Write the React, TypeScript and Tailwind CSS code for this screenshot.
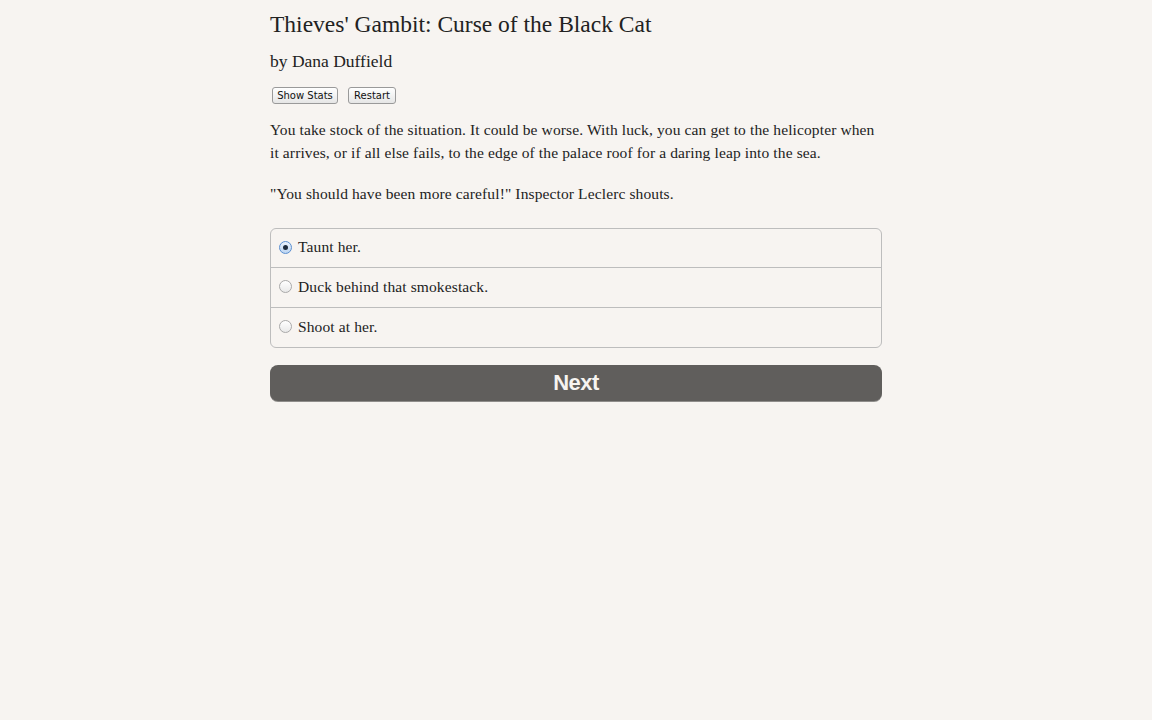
import React from "react";

const serif = "font-['Palatino_Linotype','Book_Antiqua','Liberation_Serif',serif]";

function Radio({ checked }: { checked?: boolean }) {
  return (
    <span
      className={
        "inline-flex items-center justify-center w-[13px] h-[13px] rounded-full border shrink-0 " +
        (checked
          ? "border-[#5b8fd0] bg-gradient-to-b from-[#eaf2fc] to-[#bcd5f2]"
          : "border-[#a9a9a9] bg-gradient-to-b from-[#ffffff] to-[#e9e9e9]")
      }
    >
      {checked && <span className="w-[5px] h-[5px] rounded-full bg-[#1d2b3c]" />}
    </span>
  );
}

export default function App() {
  const options = ["Taunt her.", "Duck behind that smokestack.", "Shoot at her."];
  return (
    <div className="min-h-[720px] w-full bg-[#f7f4f1] text-[#222]">
      <div className={"mx-auto w-[612px] pt-[10px] " + serif}>
        <h1 className="text-[23.5px] leading-[28px] text-[#222]">
          Thieves' Gambit: Curse of the Black Cat
        </h1>
        <div className="mt-[13px] text-[17.5px] leading-[20px] text-[#222]">by Dana Duffield</div>
        <div className="mt-[16px] flex gap-[10px] pl-[2px] font-['DejaVu_Sans',sans-serif]">
          <button className="w-[66px] h-[17px] text-[10px] leading-[15px] rounded-[3px] border border-[#9a9a9a] bg-gradient-to-b from-[#ffffff] to-[#e6e6e6] text-[#111]">
            Show Stats
          </button>
          <button className="w-[48px] h-[17px] text-[10px] leading-[15px] rounded-[3px] border border-[#9a9a9a] bg-gradient-to-b from-[#ffffff] to-[#e6e6e6] text-[#111]">
            Restart
          </button>
        </div>
        <p className="mt-[14px] text-[15.5px] leading-[23px] tracking-[0.12px]">
          You take stock of the situation. It could be worse. With luck, you can get to the helicopter when it
          arrives, or if all else fails, to the edge of the palace roof for a daring leap into the sea.
        </p>
        <p className="mt-[18px] text-[15.5px] leading-[23px] tracking-[0.12px]">
          "You should have been more careful!" Inspector Leclerc shouts.
        </p>
        <div className="mt-[23px] rounded-[6px] border border-[#bdbdbd] bg-[#f7f4f1]">
          {options.map((o, i) => (
            <div
              key={o}
              className={
                "flex items-center pb-[2px] pl-[8px] gap-[6px] text-[15.5px] tracking-[0.12px] " +
                (i === 0 ? "h-[38px]" : "h-[40px] border-t border-[#bdbdbd]")
              }
            >
              <Radio checked={i === 0} />
              <span>{o}</span>
            </div>
          ))}
        </div>
        <button className="mt-[17px] w-full h-[36px] rounded-[8px] bg-[#605e5c] text-[#f7f4f1] font-['Liberation_Sans',sans-serif] font-bold text-[22px] leading-[36px] tracking-[-0.5px] shadow-[0_1px_0_#8f8d8b]">
          Next
        </button>
      </div>
    </div>
  );
}
